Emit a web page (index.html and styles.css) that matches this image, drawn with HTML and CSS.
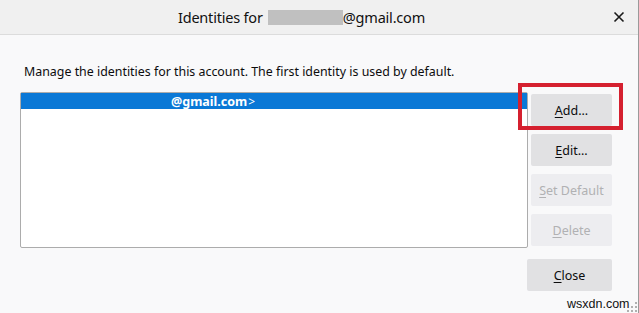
FILE: index.html
```html
<!DOCTYPE html>
<html>
<head>
<meta charset="utf-8">
<link rel="stylesheet" href="styles.css">
</head>
<body>
<div class="window">
  <div class="titlebar">
    <div class="title">Identities for <span class="redact"></span>@gmail.com</div>
    <div class="close-x">
      <svg width="12" height="12" viewBox="0 0 12 12"><path d="M1.5 1.5 L10.5 10.5 M10.5 1.5 L1.5 10.5" stroke="#1a1a1a" stroke-width="1.6" fill="none"/></svg>
    </div>
  </div>
  <div class="content">
    <p class="desc">Manage the identities for this account. The first identity is used by default.</p>
    <div class="main">
      <div class="list">
        <div class="row selected"><span class="addr">@gmail.com</span><span class="gt">&gt;</span></div>
      </div>
      <div class="buttons">
        <button class="btn"><u>A</u>dd...</button>
        <button class="btn"><u>E</u>dit...</button>
        <button class="btn disabled"><u>S</u>et Default</button>
        <button class="btn disabled"><u>D</u>elete</button>
      </div>
    </div>
    <div class="footer">
      <button class="btn wide"><u>C</u>lose</button>
    </div>
  </div>
  <div class="highlight"></div>
  <div class="watermark">wsxdn.com</div>
  <div class="grip">
    <svg width="10" height="10" viewBox="0 0 10 10" fill="#b0b0b0"><rect x="8" y="0" width="2" height="2"/><rect x="4" y="4" width="2" height="2"/><rect x="8" y="4" width="2" height="2"/><rect x="0" y="8" width="2" height="2"/><rect x="4" y="8" width="2" height="2"/><rect x="8" y="8" width="2" height="2"/></svg>
  </div>
</div>
</body>
</html>
```
FILE: styles.css
```css
html, body {
  margin: 0;
  padding: 0;
}
body {
  width: 639px;
  height: 313px;
  overflow: hidden;
  background: #f9f9fa;
  font-family: "Noto Sans", "Open Sans", sans-serif;
  color: #0c0c0d;
}
.window {
  position: relative;
  width: 639px;
  height: 313px;
  box-sizing: border-box;
  border-right: 1px solid #9a9a9a;
}
.titlebar {
  height: 34px;
  background: #f0f0f0;
  border-bottom: 1px solid #dcdcdc;
  display: flex;
  align-items: center;
  justify-content: center;
  position: relative;
}
.title {
  font-size: 14.5px;
  letter-spacing: -0.2px;
  margin-right: 35px;
  display: flex;
  align-items: center;
  color: #111;
}
.redact {
  display: inline-block;
  width: 75px;
  height: 15px;
  background: #c0c0c0;
  margin-left: 5px;
  margin-right: 0;
}
.close-x {
  position: absolute;
  right: 13px;
  top: 11px;
  width: 12px;
  height: 12px;
  display: flex;
}
.content {
  padding: 0 0 0 20px;
}
.desc {
  margin: 0;
  padding: 28px 0 0 4px;
  height: 29px;
  font-size: 12.4px;
  line-height: 17px;
  color: #0c0c0d;
}
.main {
  display: flex;
  align-items: flex-start;
  gap: 3px;
}
.list {
  width: 508px;
  height: 156px;
  box-sizing: border-box;
  border: 1px solid #acacac;
  border-radius: 2px;
  background: #fff;
}
.row {
  height: 16px;
  display: flex;
  align-items: center;
  padding-left: 150px;
  font-size: 12.5px;
}
.row.selected {
  background: #0a78d6;
  color: #fff;
}
.addr {
  font-weight: 700;
}
.gt {
  font-size: 12px;
  margin-left: 1px;
}
.buttons {
  display: flex;
  flex-direction: column;
  gap: 8px;
  padding-top: 2px;
}
.btn {
  width: 81px;
  height: 32px;
  border: none;
  border-radius: 2px;
  background: #e1e1e3;
  color: #0c0c0d;
  font-family: "Noto Sans", "Open Sans", sans-serif;
  font-size: 12.5px;
  padding: 0;
}
.btn u {
  text-underline-offset: 2px;
}
.btn.disabled {
  background: #ededf0;
  color: #b1b1b3;
}
.footer {
  display: flex;
  justify-content: flex-end;
  padding: 11px 26px 0 0;
}
.btn.wide {
  width: 85px;
  background: #e1e1e3;
}
.highlight {
  position: absolute;
  left: 518px;
  top: 83px;
  width: 105px;
  height: 47px;
  box-sizing: border-box;
  border: 4px solid #d5202f;
}
.watermark {
  position: absolute;
  left: 566px;
  top: 297px;
  font-family: "Liberation Sans", Arial, sans-serif;
  font-size: 12.5px;
  color: #111;
  line-height: 15px;
  padding: 0 1px;
}
.grip {
  position: absolute;
  right: 1px;
  bottom: 1px;
  width: 10px;
  height: 10px;
  display: flex;
}
```
